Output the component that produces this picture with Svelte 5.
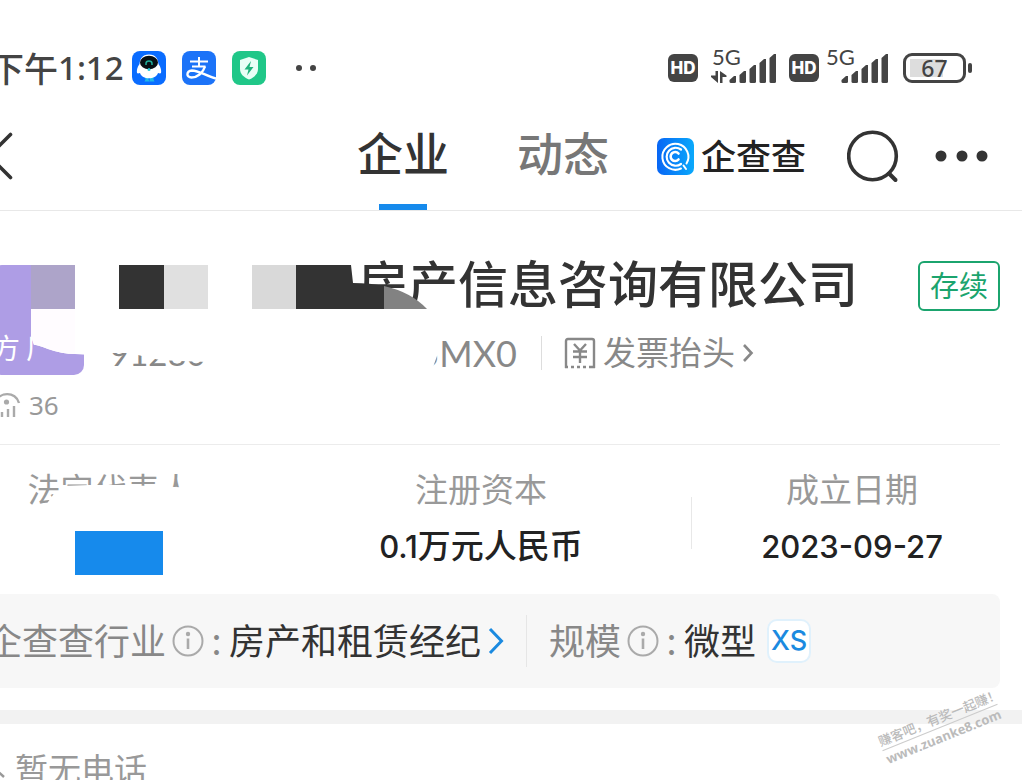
<script lang="ts">
  /**
   * Company detail: status bar, tabs, company header,
   * key figures, industry strip and phone row
   */
  const barHeights = [7, 12, 18, 24, 29];

  let tab = $state('company');
</script>

{#snippet signal()}
  <svg class="signal" width="48" height="30" viewBox="0 0 48 30" aria-hidden="true">
    {#each barHeights as h, i}
      <path d="M{i * 10 + 0.5} {30 - h + 4}L{i * 10 + 5} {30 - h}H{i * 10 + 7}V28.5Q{i * 10 + 7} 30 {i * 10 + 5.5} 30H{i * 10 + 2}Q{i * 10 + 0.5} 30 {i * 10 + 0.5} 28.5Z" fill="#444" />
    {/each}
  </svg>
{/snippet}

{#snippet info()}
  <svg width="32" height="32" viewBox="0 0 32 32" aria-hidden="true">
    <circle cx="16" cy="16" r="14.5" fill="none" stroke="#aaa" stroke-width="2" />
    <circle cx="16" cy="9" r="2.2" fill="#aaa" />
    <path d="M16 13.5V24" stroke="#aaa" stroke-width="2.6" />
  </svg>
{/snippet}

<div class="page">
  <div class="status">
    <span class="time">下午<b>1:12</b></span>
    <div class="apps">
      <svg width="34" height="34" viewBox="0 0 34 34" aria-hidden="true">
        <rect width="34" height="34" rx="8" fill="#0a6cff" />
        <path d="M13 26h3.500v2.500l1 2h-5l1-2zM18 26h3.500v2.500l1 2h-5z" fill="#20b8e8" />
        <path d="M17 3.500C10 3.500 8 8 7.500 13C5 16 4.500 20 5 22C6 23 7 22 8 22C10 29 24 29 26 22C27 22 28 23 29 22C29.500 20 29 16 26.500 13C26 8 24 3.500 17 3.500Z" fill="#fff" />
        <ellipse cx="17" cy="11.500" rx="9" ry="6.800" fill="#071014" />
        <path d="M14 14v-1.500a3 2.500 0 0 1 6 0V14" fill="none" stroke="#1fae9a" stroke-width="1.500" />
        <circle cx="17" cy="18.500" r="1.500" fill="#27c9d8" />
      </svg>
      <svg width="34" height="34" viewBox="0 0 34 34" fill="none" stroke="#fff" aria-hidden="true">
        <rect width="34" height="34" rx="8" fill="#1c73f8" stroke="none" />
        <path d="M8 10.500H26M17 6V15.500M10 15.500H23.500" stroke-width="2" />
        <path d="M23 15.500C21 22 15 26.500 9.500 26.500C4 26.500 4 20 10 19.500C17 19.500 24 25 34 27.500" stroke-width="2.400" />
      </svg>
      <svg width="34" height="34" viewBox="0 0 34 34" aria-hidden="true">
        <rect width="34" height="34" rx="8" fill="#20c788" />
        <path d="M17 6L26 9V18C26 23 22 26.500 17 28.500C12 26.500 8 23 8 18V9Z" fill="#e9fff6" />
        <path d="M19 10L12.500 18.500H16.500L15 24.500L21.500 16H17.500Z" fill="#20b37c" />
      </svg>
      <svg class="more-apps" width="22" height="8" viewBox="0 0 22 8" fill="#444" aria-hidden="true">
        <circle cx="4" cy="4" r="3" /><circle cx="18" cy="4" r="3" />
      </svg>
    </div>
    <div class="radio">
      <span class="hd">HD</span>
      <span class="cell">
        <span class="net">5G</span>
        <svg class="arrows" width="16" height="12" viewBox="0 0 16 12" fill="#444" aria-hidden="true">
          <path d="M4.500 0H7V12L0 6V4.500H4.500ZM9 12V0L15.500 4.500V6H11.500V12Z" />
        </svg>
        {@render signal()}
      </span>
      <span class="hd">HD</span>
      <span class="cell second">
        <span class="net">5G</span>
        {@render signal()}
      </span>
      <span class="battery"><span>67</span></span>
    </div>
  </div>

  <header class="nav">
    <button class="back" aria-label="返回">
      <svg width="14" height="48" viewBox="0 0 14 48" fill="none" stroke="#333" stroke-width="3.600" stroke-linecap="round" aria-hidden="true">
        <path d="M10.500 2.500L-11 24L10.500 45.500" />
      </svg>
    </button>
    <nav class="tabs">
      <button class:active={tab === 'company'} onclick={() => (tab = 'company')}>企业</button>
      <button class:active={tab === 'news'} onclick={() => (tab = 'news')}>动态</button>
    </nav>
    <a class="brand" href="#home">
      <svg width="37" height="37" viewBox="0 0 37 37" fill="none" stroke="#fff" stroke-linecap="round" aria-hidden="true">
        <defs>
          <linearGradient id="brand-bg"><stop stop-color="#0866f5" /><stop offset="1" stop-color="#0aa9fb" /></linearGradient>
        </defs>
        <rect width="37" height="37" rx="7" fill="url(#brand-bg)" stroke="none" />
        <path d="M24 30.500A13 13 0 1 1 29.500 25.500M26.500 27.500L29 31" stroke-width="2" />
        <path d="M24 11.500A9 9 0 1 0 24 26" stroke-width="2.200" />
        <path d="M21.500 15.500A4.500 4.500 0 1 0 21.500 21.500" stroke-width="2.600" />
      </svg>
      <span>企查查</span>
    </a>
    <button class="search" aria-label="搜索">
      <svg width="52" height="54" viewBox="0 0 52 54" fill="none" stroke="#333" stroke-linecap="round" aria-hidden="true">
        <circle cx="25.500" cy="27" r="23.800" stroke-width="3.600" />
        <path d="M42 44.500L48.500 51" stroke-width="4" />
      </svg>
    </button>
    <button class="menu" aria-label="更多">
      <svg width="54" height="12" viewBox="0 0 54 12" fill="#333" aria-hidden="true">
        <circle cx="6" cy="6" r="5.500" /><circle cx="27" cy="6" r="5.500" /><circle cx="47" cy="6" r="5.500" />
      </svg>
    </button>
  </header>

  <section class="company">
    <div class="summary">
      <div class="logo"><span>方</span><span>厂</span></div>
      <div class="titles">
        <div class="title-row">
          <h1>房产信息咨询有限公司</h1>
          <span class="state">存续</span>
        </div>
        <div class="code-row">
          <span class="code-head">91280</span>
          <span class="code-tail">5MX0</span>
          <a class="invoice" href="#invoice">
            <svg width="32" height="32" viewBox="0 0 32 32" fill="none" stroke="#888" stroke-width="2.400" aria-hidden="true">
              <path d="M2 31V4Q2 2 4 2H28Q30 2 30 4V31" />
              <path d="M1 30H4M7 30H10M13 30H16M19 30H22M25 30H31" />
              <path d="M10 7L16 13.500L22 7M16 13.500V26M9 14.500H23M9 20H23" />
            </svg>
            <span>发票抬头</span>
            <svg width="12" height="20" viewBox="0 0 12 20" fill="none" stroke="#888" stroke-width="2.600" aria-hidden="true">
              <path d="M2 2L9.500 10L2 18" />
            </svg>
          </a>
        </div>
      </div>
    </div>
    <!-- censor blocks drawn over name, logo and credit code -->
    <svg class="censor" width="440" height="180" viewBox="0 211 440 180" aria-hidden="true">
      <path d="M31 265H90V355L75 354Q62 354 48 349T34 345L31 336Z" fill="#fff" />
      <path d="M31 309H75V354Q62 354 48 349T34 345L31 336Z" fill="#fffcff" />
      <rect x="31" y="265" width="44" height="44" fill="#ada4c9" />
      <rect x="119" y="265" width="45" height="44" fill="#333" />
      <rect x="164" y="265" width="44" height="44" fill="#e0e0e0" />
      <rect x="252" y="265" width="44" height="44" fill="#d9d9d9" />
      <path d="M296 265H351L353 283Q370 283 384 286V309H296Z" fill="#333" />
      <path d="M384 286Q411 292 427 309H384Z" fill="#828282" />
      <path d="M352 309H427V318H352Z" fill="#fff" />
      <path d="M104 335H222V372H208V362L180 361L160 360L146 357L130 353H104Z" fill="#fff" />
      <path d="M408 335H440L437 356L432 370H408Z" fill="#fff" />
    </svg>
    <div class="views">
      <svg width="22" height="26" viewBox="0 0 22 26" fill="none" stroke="#aaa" stroke-width="2.400" aria-hidden="true">
        <path d="M-5 12C-2 -1 16 -1 19 11" />
        <circle cx="6.500" cy="10" r="2.600" fill="#aaa" stroke="none" />
        <path d="M2 20V25M8 17V25M14 14V25" />
      </svg>
      36
    </div>
  </section>

  <dl class="stats">
    <div class="rep">
      <dt>法定代表人</dt>
      <dd><span class="hidden-name"></span></dd>
      <svg class="rep-censor" width="170" height="36" viewBox="0 0 170 36" aria-hidden="true">
        <path d="M32 14L60 13L95 13L170 16V36H16L18 30L23 23L29 22Z" fill="#fff" />
      </svg>
    </div>
    <div class="capital">
      <dt>注册资本</dt>
      <dd><b>0.1</b>万元人民币</dd>
    </div>
    <div class="founded">
      <dt>成立日期</dt>
      <dd><b>2023-09-27</b></dd>
    </div>
  </dl>

  <div class="facts">
    <div class="industry">
      <span class="key">企查查行业</span>
      {@render info()}
      <span class="colon">:</span>
      <a href="#industry">
        <span>房产和租赁经纪</span>
        <svg width="16" height="28" viewBox="0 0 16 28" fill="none" stroke="#1b8ae0" stroke-width="3" aria-hidden="true">
          <path d="M2 2L13.500 14L2 26" />
        </svg>
      </a>
    </div>
    <div class="scale">
      <span class="key">规模</span>
      {@render info()}
      <span class="colon">:</span>
      <span>微型</span>
      <span class="size">XS</span>
    </div>
  </div>

  <div class="band"></div>

  <div class="phone">
    <svg width="6" height="30" viewBox="0 0 6 30" fill="none" stroke="#999" stroke-width="2.400" aria-hidden="true">
      <path d="M-6 15L4 24" />
    </svg>
    暂无电话
  </div>

  <div class="watermark">
    <span>赚客吧，有奖一起赚！</span>
    <span class="site">www.zuanke8.com</span>
  </div>
</div>

<style>
  :global(body) {
    background: #fff;
  }

  .page {
    position: relative;
    height: 100vh;
    overflow: hidden;
    font-family: 'Noto Sans CJK SC', sans-serif;
    color: #333;
  }

  button {
    padding: 0;
    border: 0;
    background: none;
    font: inherit;
    color: inherit;
    cursor: pointer;
  }

  a {
    color: inherit;
    text-decoration: none;
  }

  svg {
    display: block;
    flex-shrink: 0;
  }

  b {
    font-family: Inter, sans-serif;
    font-weight: 500;
  }

  .status {
    display: flex;
    align-items: center;
    height: 36px;
    padding: 50px 56px 16px 0;
    color: #444;
  }

  .time {
    display: flex;
    align-items: center;
    width: 132px;
    margin-left: -10px;
    font-size: 34px;
    font-weight: 500;
    line-height: 36px;
    white-space: nowrap;
  }

  .time b {
    font-family: 'Noto Sans', sans-serif;
    font-size: 33px;
    line-height: 36px;
  }

  .apps {
    display: flex;
    align-items: center;
    gap: 16px;
    margin-left: 10px;
  }

  .more-apps {
    margin-left: 13px;
  }

  .radio {
    display: flex;
    align-items: center;
    margin-left: auto;
  }

  .hd {
    width: 30px;
    border-radius: 6px;
    background: #444;
    color: #fff;
    font: 800 17px/28px Inter, sans-serif;
    text-align: center;
  }

  .cell {
    position: relative;
    display: flex;
    width: 66px;
    height: 36px;
    margin: 0 12px 0 13px;
    align-items: flex-end;
    justify-content: flex-end;
  }

  .cell.second {
    width: 64px;
    margin: 0 14px 0 6px;
  }

  .signal {
    margin-bottom: 3px;
  }

  .net {
    position: absolute;
    left: 1px;
    top: -5px;
    font: 22px/24px Lato, sans-serif;
  }

  .arrows {
    position: absolute;
    left: 0;
    bottom: 3px;
  }

  .battery {
    position: relative;
    display: flex;
    width: 57px;
    height: 24px;
    border: 3px solid #444;
    border-radius: 9px;
  }

  .battery::after {
    content: '';
    position: absolute;
    right: -9px;
    top: 7px;
    width: 4px;
    height: 10px;
    border-radius: 2px;
    background: #444;
  }

  .battery span {
    flex: 1;
    margin: 3px 4px;
    background: linear-gradient(90deg, #ddd 67%, #fff 67%);
    font: 500 23px/18px 'Noto Sans', sans-serif;
    text-align: center;
  }

  .nav {
    display: flex;
    align-items: center;
    height: 108px;
    padding-right: 33px;
    border-bottom: 1px solid #e8e8e8;
  }

  .tabs {
    display: flex;
    gap: 68px;
    height: 108px;
    margin-left: auto;
  }

  .tabs button {
    position: relative;
    padding-bottom: 10px;
    color: #777;
    font-size: 46px;
    font-weight: 500;
    line-height: 98px;
  }

  .tabs .active {
    color: #333;
  }

  .tabs .active::after {
    content: '';
    position: absolute;
    left: 22px;
    right: 22px;
    bottom: 0;
    height: 6px;
    background: #168aec;
  }

  .brand {
    display: flex;
    align-items: center;
    gap: 7px;
    margin-left: 48px;
    color: #222;
    font-size: 35px;
    font-weight: 500;
    line-height: 40px;
  }

  .brand span {
    padding-bottom: 2px;
  }

  .search {
    margin-left: 41px;
  }

  .menu {
    margin-left: 36px;
  }

  .company {
    position: relative;
    height: 233px;
    margin-right: 22px;
    border-bottom: 1px solid #ececec;
  }

  .summary {
    display: flex;
    padding-top: 44px;
  }

  .logo {
    display: flex;
    align-items: flex-end;
    gap: 6px;
    width: 92px;
    height: 110px;
    box-sizing: border-box;
    margin: 10px 0 0 -8px;
    padding-bottom: 10px;
    border-radius: 10px;
    background: #ae9de5;
    color: #fff;
    font-size: 28px;
    line-height: 36px;
  }

  .titles {
    flex: 1;
    padding-left: 26px;
  }

  .title-row {
    display: flex;
    align-items: center;
    justify-content: space-between;
    height: 62px;
    padding-left: 248px;
  }

  h1 {
    margin: 0;
    padding-bottom: 10px;
    font-size: 50px;
    font-weight: 500;
    line-height: 60px;
  }

  .state {
    padding: 0 10px 4px;
    border: 2px solid #1ba46e;
    border-radius: 6px;
    color: #1ba46e;
    font-size: 29px;
    line-height: 42px;
  }

  .code-row {
    display: flex;
    align-items: center;
    height: 72px;
    color: #888;
    font-size: 33px;
  }

  .code-head,
  .code-tail {
    font-family: Lato, sans-serif;
    font-size: 36px;
  }

  .code-head {
    font-size: 33px;
  }

  .code-tail {
    margin-left: auto;
    padding-right: 24px;
    border-right: 1px solid #ddd;
    line-height: 34px;
  }

  .invoice {
    display: flex;
    align-items: center;
    gap: 7px;
    margin: 0 246px 0 22px;
    line-height: 40px;
  }

  .invoice span {
    padding-bottom: 4px;
  }

  .censor {
    position: absolute;
    left: 0;
    top: 0;
  }

  .views {
    display: flex;
    align-items: center;
    gap: 7px;
    color: #999;
    font: 26px/32px 'Noto Sans', sans-serif;
  }

  .stats {
    display: grid;
    grid-template-columns: 270fr 422fr 320fr;
    height: 117px;
    margin: 0 10px 0 0;
    padding: 23px 0 9px;
    font-size: 33px;
    line-height: 40px;
    text-align: center;
  }

  dt {
    color: #999;
  }

  dd {
    margin: 16px 0 0;
    color: #222;
    font-weight: 500;
  }

  dd b {
    font-size: 31px;
  }

  .rep {
    position: relative;
    padding-right: 50px;
  }

  .rep-censor {
    position: absolute;
    left: 30px;
    top: 4px;
  }

  .hidden-name {
    display: block;
    width: 88px;
    height: 44px;
    margin: 23px 0 0 75px;
    background: #168aec;
  }

  .capital {
    background: linear-gradient(#e8e8e8, #e8e8e8) right 29px / 1px 52px no-repeat;
  }

  .facts {
    display: flex;
    align-items: center;
    height: 94px;
    margin-right: 22px;
    border-radius: 0 8px 8px 0;
    background: #f7f7f7;
    font-size: 36px;
    line-height: 48px;
  }

  .industry,
  .scale,
  .industry a {
    display: flex;
    align-items: center;
    white-space: nowrap;
  }

  .facts span:not(.size) {
    padding-bottom: 4px;
  }

  .industry {
    margin-left: -14px;
    padding-right: 22px;
    border-right: 1px solid #e6e6e6;
  }

  .industry a {
    gap: 7px;
  }

  .scale {
    padding-left: 22px;
  }

  .key {
    margin-right: 6px;
    color: #888;
  }

  .colon {
    width: 25px;
    color: #888;
    text-align: center;
  }

  .size {
    margin-left: 11px;
    width: 40px;
    border: 2px solid #e0f1fc;
    border-radius: 10px;
    background: #fff;
    color: #1b8ae0;
    font: 500 27px/40px Inter, sans-serif;
    text-align: center;
  }

  .band {
    height: 14px;
    margin-top: 22px;
    background: #f2f2f2;
  }

  .phone {
    display: flex;
    align-items: center;
    gap: 9px;
    padding-top: 20px;
    color: #999;
    font-size: 33px;
    line-height: 48px;
  }

  .watermark {
    position: absolute;
    right: 20px;
    bottom: 34px;
    display: flex;
    flex-direction: column;
    width: 124px;
    color: #bbb;
    font-size: 13px;
    font-weight: 500;
    line-height: 18px;
    white-space: nowrap;
    transform: rotate(-22deg);
  }

  .site {
    border-top: 1px solid #ccc;
    font: 700 13px/18px 'Open Sans', sans-serif;
    text-align: center;
  }
</style>
